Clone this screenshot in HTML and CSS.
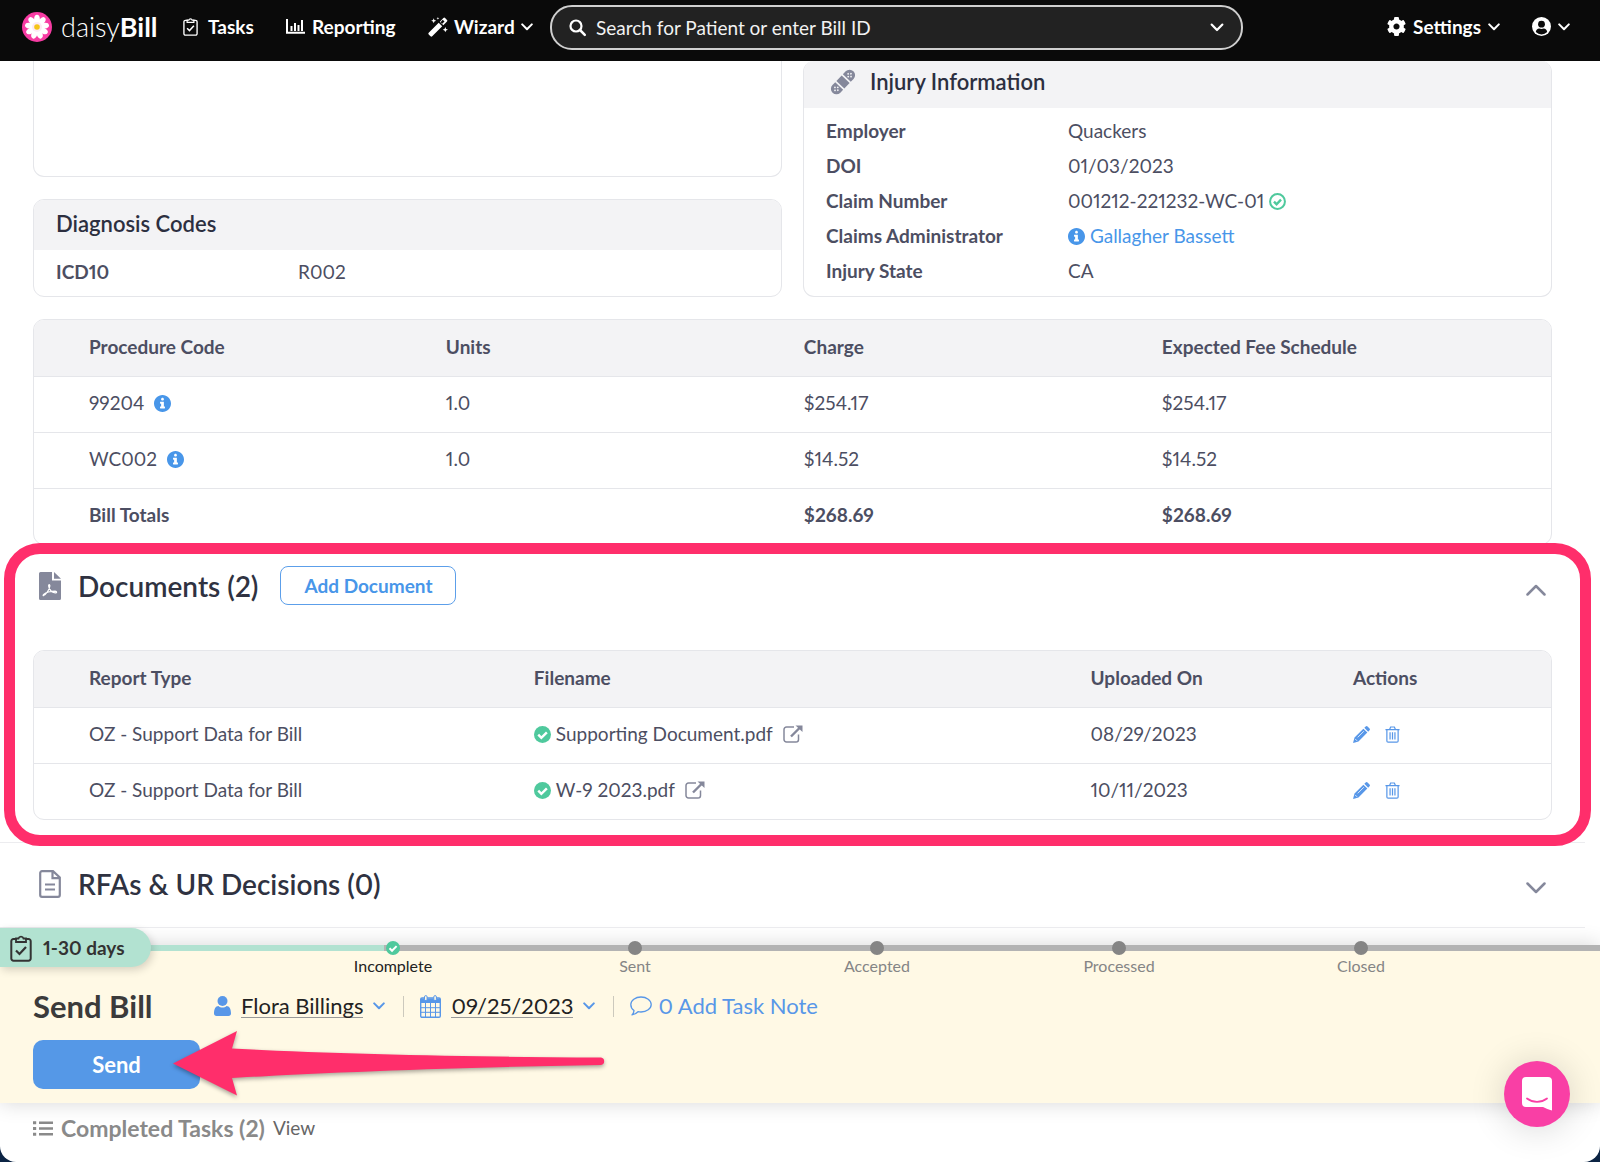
FILE: index.html
```html
<!DOCTYPE html>
<html lang="en">
<head>
<meta charset="utf-8">
<meta name="viewport" content="width=device-width, initial-scale=1">
<title>daisyBill</title>
<link rel="stylesheet" href="styles.css">
</head>
<body>
<svg class="sprite" aria-hidden="true">
  <symbol id="chevron" viewBox="0 0 12 8"><path d="M1.2 1.4 6 6.2l4.800-4.800" fill="none" stroke="currentColor" stroke-width="2" stroke-linecap="round" stroke-linejoin="round"/></symbol>
  <symbol id="chevron-thin" viewBox="0 0 20 12"><path d="M1.500 1.500 10 10l8.500-8.500" fill="none" stroke="currentColor" stroke-width="2.500" stroke-linecap="round" stroke-linejoin="round"/></symbol>
  <symbol id="clipboard" viewBox="0 0 22 28"><path d="M7 5H3.500A2.200 2.200 0 0 0 1.300 7.200v17.300a2.200 2.200 0 0 0 2.200 2.200h15a2.200 2.200 0 0 0 2.200-2.200V7.200A2.200 2.200 0 0 0 18.500 5H15" fill="none" stroke="currentColor" stroke-width="2"/><path d="M6 8V4.500h2.500a2.600 2.600 0 0 1 5 0H16V8z" fill="none" stroke="currentColor" stroke-width="1.800"/><path d="m6 16.500 3.500 3.500 6.500-7" fill="none" stroke="currentColor" stroke-width="2.200"/></symbol>
  <symbol id="info" viewBox="8 8 496 496"><path fill="currentColor" d="M256 8C119.043 8 8 119.083 8 256c0 136.997 111.043 248 248 248s248-111.003 248-248C504 119.083 392.957 8 256 8zm0 80c23.196 0 42 18.804 42 42s-18.804 42-42 42-42-18.804-42-42 18.804-42 42-42zm72 300c0 6.627-5.373 12-12 12h-120c-6.627 0-12-5.373-12-12v-32c0-6.627 5.373-12 12-12h20v-84h-20c-6.627 0-12-5.373-12-12v-32c0-6.627 5.373-12 12-12h88c6.627 0 12 5.373 12 12v128h20c6.627 0 12 5.373 12 12v32z"/></symbol>
  <symbol id="check" viewBox="0 0 16 16"><circle cx="8" cy="8" r="8" fill="#4fc99d"/><path d="m4 8.200 2.900 2.900 5.200-5.200" fill="none" stroke="#fff" stroke-width="2.300"/></symbol>
  <symbol id="check-ring" viewBox="0 0 16 16"><circle cx="8" cy="8" r="7" fill="none" stroke="#4fc99d" stroke-width="1.900"/><path d="m4.700 8.200 2.400 2.400 4.200-4.300" fill="none" stroke="#4fc99d" stroke-width="2.300"/></symbol>
  <symbol id="external" viewBox="0 0 20 18"><path d="M11 2H3.500A2.500 2.500 0 0 0 1 4.500v10A2.500 2.500 0 0 0 3.500 17h9.500a2.500 2.500 0 0 0 2.500-2.500V9.500" fill="none" stroke="currentColor" stroke-width="1.500"/><path d="m8 11.500 8.500-8.500" stroke="currentColor" stroke-width="2.400"/><path d="M12.500.5H19.500V7z" fill="currentColor"/></symbol>
  <symbol id="pencil" viewBox="0 0 18 18"><path fill="currentColor" d="m11 2.800 4.200 4.200-9.400 9.400L0 18l1.600-5.800zM12 1.900 13.400.5a1.500 1.500 0 0 1 2 0l2.100 2.100a1.500 1.500 0 0 1 0 2L16.100 6z"/><path d="m2.300 13.700 2 2M5 12l6.500-6.500" stroke="#fff" stroke-width=".8"/></symbol>
  <symbol id="trash" viewBox="0 0 16 18"><path d="M.5 3.700h15M5 3.400 6 1h4l1 2.400M2 4v11.800c0 .8.500 1.300 1.300 1.300h9.400c.8 0 1.300-.5 1.300-1.300V4M5.400 6.700v7.500M8 6.700v7.500M10.600 6.700v7.500" fill="none" stroke="currentColor" stroke-width="1.300"/></symbol>
</svg>

<header class="topbar">
  <a class="brand" href="#">
    <svg class="brand-mark" viewBox="0 0 30 30" aria-hidden="true">
      <circle cx="15" cy="15" r="15" fill="#f73ca3"/>
      <g fill="#fff">
        <ellipse cx="15" cy="7.700" rx="2.900" ry="4.900"/>
        <ellipse cx="15" cy="7.700" rx="2.900" ry="4.900" transform="rotate(40 15 15)"/>
        <ellipse cx="15" cy="7.700" rx="2.900" ry="4.900" transform="rotate(80 15 15)"/>
        <ellipse cx="15" cy="7.700" rx="2.900" ry="4.900" transform="rotate(120 15 15)"/>
        <ellipse cx="15" cy="7.700" rx="2.900" ry="4.900" transform="rotate(160 15 15)"/>
        <ellipse cx="15" cy="7.700" rx="2.900" ry="4.900" transform="rotate(200 15 15)"/>
        <ellipse cx="15" cy="7.700" rx="2.900" ry="4.900" transform="rotate(240 15 15)"/>
        <ellipse cx="15" cy="7.700" rx="2.900" ry="4.900" transform="rotate(280 15 15)"/>
        <ellipse cx="15" cy="7.700" rx="2.900" ry="4.900" transform="rotate(320 15 15)"/>
      </g>
      <circle cx="15" cy="15" r="5" fill="#fdeaf5"/>
      <circle cx="15" cy="15" r="2.800" fill="#f5c518"/>
    </svg>
    <span class="brand-name">daisy<b>Bill</b></span>
  </a>
  <nav class="nav">
    <a class="nav-link nav-tasks" href="#"><svg width="15" height="19" aria-hidden="true"><use href="#clipboard"/></svg>Tasks</a>
    <a class="nav-link nav-reporting" href="#"><svg width="19" height="15" viewBox="0 0 19 15" aria-hidden="true"><path d="M1 0v13.800h18" fill="none" stroke="currentColor" stroke-width="2"/><path d="M5.500 7v5M9 4v8M12.500 6v6M16 1v11" stroke="currentColor" stroke-width="2"/></svg>Reporting</a>
    <a class="nav-link nav-wizard" href="#"><svg width="20" height="20" viewBox="0 0 20 20" aria-hidden="true"><path fill="currentColor" d="m.7 15.800 10-10 3.500 3.500-10 10a1.200 1.200 0 0 1-1.700 0L.7 17.500a1.200 1.200 0 0 1 0-1.700zM11.800 4.700 15.400 1a1.200 1.200 0 0 1 1.700 0L19 2.900a1.200 1.200 0 0 1 0 1.700l-3.700 3.700zM5 3l.7-1.800L6.400 3l1.800.7-1.800.7L5.700 6.200 5 4.400l-1.800-.7zM16.500 12l.8-2 .8 2 1.900.7-1.900.7-.8 1.900-.8-1.900-1.800-.7zM9.500 1l.4-1 .4 1 1 .4-1 .4-.4 1-.4-1-1-.4z"/><path d="m12.500 5.200 2.200-2.400 1.800 1.700-2.200 2.300z" fill="#0a0a0a"/></svg>Wizard<svg class="caret" width="12" height="8" aria-hidden="true"><use href="#chevron"/></svg></a>
  </nav>
  <form class="search" role="search">
    <svg width="17" height="17" viewBox="0 0 17 17" aria-hidden="true"><circle cx="7" cy="7" r="5.500" fill="none" stroke="#fff" stroke-width="2.200"/><path d="m11 11 4.800 4.800" stroke="#fff" stroke-width="2.500" stroke-linecap="round"/></svg>
    <input class="search-input" type="text" aria-label="Search" placeholder="Search for Patient or enter Bill ID">
    <svg class="search-caret" width="14" height="9" viewBox="0 0 12 8" aria-hidden="true"><use href="#chevron"/></svg>
  </form>
  <div class="account">
    <a class="nav-link nav-settings" href="#"><svg width="19" height="19" viewBox="8 8 496 496" aria-hidden="true"><path fill="currentColor" d="M487.400 315.700l-42.600-24.600c4.300-23.200 4.300-47 0-70.200l42.600-24.600c4.900-2.800 7.100-8.600 5.500-14-11.100-35.600-30-67.800-54.700-94.600-3.800-4.100-10-5.100-14.800-2.300L380.800 110c-17.900-15.400-38.500-27.300-60.800-35.100V25.800c0-5.600-3.900-10.500-9.400-11.700-36.700-8.200-74.300-7.800-109.200 0-5.500 1.200-9.400 6.100-9.400 11.700V75c-22.200 7.900-42.800 19.800-60.800 35.100L88.700 85.500c-4.900-2.800-11-1.900-14.800 2.300-24.700 26.700-43.600 58.900-54.700 94.600-1.700 5.400.6 11.200 5.500 14L67.300 221c-4.300 23.200-4.300 47 0 70.200l-42.600 24.600c-4.900 2.800-7.100 8.600-5.500 14 11.100 35.600 30 67.800 54.700 94.600 3.800 4.100 10 5.100 14.800 2.300l42.600-24.600c17.900 15.400 38.500 27.300 60.800 35.100v49.200c0 5.600 3.900 10.500 9.400 11.700 36.700 8.200 74.300 7.800 109.200 0 5.500-1.200 9.400-6.100 9.400-11.700v-49.200c22.200-7.900 42.800-19.800 60.800-35.100l42.600 24.600c4.900 2.800 11 1.900 14.800-2.300 24.700-26.700 43.600-58.900 54.700-94.600 1.500-5.500-.7-11.300-5.600-14.100zM256 336c-44.100 0-80-35.900-80-80s35.900-80 80-80 80 35.900 80 80-35.900 80-80 80z"/></svg>Settings<svg class="caret" width="12" height="8" aria-hidden="true"><use href="#chevron"/></svg></a>
    <a class="nav-link" href="#" aria-label="Account"><svg width="19" height="19" viewBox="0 0 19 19" aria-hidden="true"><circle cx="9.500" cy="9.500" r="9.500" fill="#fff"/><circle cx="9.500" cy="7.200" r="3.400" fill="#0a0a0a"/><path d="M3.800 15c.3-2.200 1.700-3.400 3.400-3.400.7.300 1.500.5 2.300.5s1.600-.2 2.300-.5c1.700 0 3.100 1.200 3.400 3.400a8 8 0 0 1-11.400 0z" fill="#0a0a0a"/></svg><svg class="caret" width="12" height="8" aria-hidden="true"><use href="#chevron"/></svg></a>
  </div>
</header>

<main class="content">
  <div class="overview">
    <div class="cards">
      <div class="cards-col">
        <section class="card card-blank"></section>
        <section class="card">
          <h3 class="card-title">Diagnosis Codes</h3>
          <dl class="facts">
            <dt>ICD10</dt><dd>R002</dd>
          </dl>
        </section>
      </div>
      <section class="card card-injury">
        <h3 class="card-title"><svg width="28" height="28" viewBox="0 0 28 28" aria-hidden="true"><g transform="rotate(-46 14 14)"><path fill="#85889b" d="M6 8.500h2.500v11H4.500A5.500 5.500 0 0 1-1 14a5.500 5.500 0 0 1 5.500-5.500zM10.200 8.500h7.600v11h-7.600zM19.500 8.500h4A5.500 5.500 0 0 1 29 14a5.500 5.500 0 0 1-5.500 5.500h-4z"/><g fill="#f3f3f5"><circle cx="2.500" cy="14" r=".9"/><circle cx="6.500" cy="14" r=".9"/><circle cx="4.500" cy="12" r=".9"/><circle cx="4.500" cy="16" r=".9"/><circle cx="21.500" cy="14" r=".9"/><circle cx="25.500" cy="14" r=".9"/><circle cx="23.500" cy="12" r=".9"/><circle cx="23.500" cy="16" r=".9"/></g></g></svg>Injury Information</h3>
        <dl class="facts">
          <dt>Employer</dt><dd>Quackers</dd>
          <dt>DOI</dt><dd>01/03/2023</dd>
          <dt>Claim Number</dt><dd>001212-221232-WC-01 <svg width="17" height="17" aria-hidden="true"><use href="#check-ring"/></svg></dd>
          <dt>Claims Administrator</dt><dd class="admin"><svg width="17" height="17" aria-hidden="true"><use href="#info"/></svg> <a href="#">Gallagher Bassett</a></dd>
          <dt>Injury State</dt><dd>CA</dd>
        </dl>
      </section>
    </div>

    <div class="card">
      <table class="grid-table codes">
        <thead><tr><th>Procedure Code</th><th>Units</th><th>Charge</th><th>Expected Fee Schedule</th></tr></thead>
        <tbody>
          <tr><td>99204<svg class="info" width="17" height="17" aria-hidden="true"><use href="#info"/></svg></td><td>1.0</td><td>$254.17</td><td>$254.17</td></tr>
          <tr><td>WC002<svg class="info" width="17" height="17" aria-hidden="true"><use href="#info"/></svg></td><td>1.0</td><td>$14.52</td><td>$14.52</td></tr>
          <tr class="totals"><td>Bill Totals</td><td></td><td>$268.69</td><td>$268.69</td></tr>
        </tbody>
      </table>
    </div>
  </div>

  <section class="panel documents">
    <div class="panel-head">
      <svg width="22" height="28" viewBox="0 0 22 28" aria-hidden="true"><path fill="#85889b" d="M1.500 0H13v8.500h9V26.500a1.500 1.500 0 0 1-1.500 1.500h-19A1.500 1.500 0 0 1 0 26.500v-25A1.500 1.500 0 0 1 1.500 0zM15 0l7 6.700h-7z"/><path d="M4.500 23.500c2.500-.8 6-6 6.300-9.500 0-1.800-1.200-1.700-1.100 0 .3 3.400 3 6.500 6.500 6.900 1.900.1 1.700-1.600 0-1.700-4 .1-9.500 1.500-11.500 3.200-.8.800-.5 1.400-.2 1.100z" fill="none" stroke="#fff" stroke-width="1.300"/></svg>
      <h2>Documents (2)</h2>
      <button class="btn-outline" type="button">Add Document</button>
      <button class="toggle" type="button" aria-label="Collapse documents"><svg class="flip" width="20" height="12" aria-hidden="true"><use href="#chevron-thin"/></svg></button>
    </div>
    <div class="card">
      <table class="grid-table files">
        <thead><tr><th>Report Type</th><th>Filename</th><th>Uploaded On</th><th>Actions</th></tr></thead>
        <tbody>
          <tr>
            <td>OZ - Support Data for Bill</td>
            <td><span class="file"><svg width="17" height="17" aria-hidden="true"><use href="#check"/></svg>Supporting Document.pdf<a href="#" aria-label="Open"><svg width="20" height="18" aria-hidden="true"><use href="#external"/></svg></a></span></td>
            <td>08/29/2023</td>
            <td><span class="actions"><button type="button" aria-label="Edit"><svg width="17" height="17" aria-hidden="true"><use href="#pencil"/></svg></button><button type="button" aria-label="Delete"><svg width="15" height="17" aria-hidden="true"><use href="#trash"/></svg></button></span></td>
          </tr>
          <tr>
            <td>OZ - Support Data for Bill</td>
            <td><span class="file"><svg width="17" height="17" aria-hidden="true"><use href="#check"/></svg>W-9 2023.pdf<a href="#" aria-label="Open"><svg width="20" height="18" aria-hidden="true"><use href="#external"/></svg></a></span></td>
            <td>10/11/2023</td>
            <td><span class="actions"><button type="button" aria-label="Edit"><svg width="17" height="17" aria-hidden="true"><use href="#pencil"/></svg></button><button type="button" aria-label="Delete"><svg width="15" height="17" aria-hidden="true"><use href="#trash"/></svg></button></span></td>
          </tr>
        </tbody>
      </table>
    </div>
    <div class="highlight"></div>
  </section>

  <section class="panel">
    <div class="panel-head">
      <svg width="22" height="28" viewBox="0 0 22 28" aria-hidden="true"><path d="M3 1.200h11l6.800 6.300V25a1.800 1.800 0 0 1-1.800 1.800H3A1.800 1.800 0 0 1 1.200 25V3A1.800 1.800 0 0 1 3 1.200zM13.500 1.500v6.700h7" fill="none" stroke="#85889b" stroke-width="2.200"/><path d="M6 14.500h10M6 19.500h10" stroke="#85889b" stroke-width="2"/></svg>
      <h2>RFAs &amp; UR Decisions (0)</h2>
      <button class="toggle" type="button" aria-label="Expand RFAs and UR decisions"><svg width="20" height="12" aria-hidden="true"><use href="#chevron-thin"/></svg></button>
    </div>
  </section>
</main>

<section class="task">
  <div class="track"><div class="track-done"></div></div>
  <div class="due"><svg width="22" height="28" aria-hidden="true"><use href="#clipboard"/></svg>1-30 days</div>
  <ol class="steps">
    <li class="current"><svg width="14" height="14" aria-hidden="true"><use href="#check"/></svg>Incomplete</li>
    <li><i class="dot"></i>Sent</li>
    <li><i class="dot"></i>Accepted</li>
    <li><i class="dot"></i>Processed</li>
    <li><i class="dot"></i>Closed</li>
  </ol>
  <div class="task-row">
    <h2 class="task-title">Send Bill</h2>
    <button class="meta" type="button"><svg width="17" height="20" viewBox="0 0 17 20" aria-hidden="true"><circle cx="8.500" cy="5" r="5" fill="#5897e8"/><path d="M0 17.500c0-4.500 1.500-7.500 4.500-7.500 1 1 2.500 1.500 4 1.500s3-.5 4-1.500c3 0 4.500 3 4.500 7.500 0 1.500-1 2.500-2.500 2.500h-12C1 20 0 19 0 17.500z" fill="#5897e8"/></svg><span class="meta-text">Flora Billings</span><svg width="12" height="8" aria-hidden="true"><use href="#chevron"/></svg></button>
    <button class="meta" type="button"><svg width="21" height="23" viewBox="0 0 21 23" aria-hidden="true"><path d="M2 3h17a1.300 1.300 0 0 1 1.300 1.300V21A1.300 1.300 0 0 1 19 22.300H2A1.300 1.300 0 0 1 .7 21V4.300A1.300 1.300 0 0 1 2 3z" fill="none" stroke="#5897e8" stroke-width="1.400"/><path d="M1 3.500h19V8H1z" fill="#5897e8"/><path d="M5.500 8v14M10.500 8v14M15.500 8v14M1 12.700h19M1 17.300h19" stroke="#5897e8"/><rect x="4.500" y=".6" width="2.600" height="5" rx="1.300" fill="#fff9e5" stroke="#5897e8"/><rect x="13.800" y=".6" width="2.600" height="5" rx="1.300" fill="#fff9e5" stroke="#5897e8"/></svg><span class="meta-text">09/25/2023</span><svg width="12" height="8" aria-hidden="true"><use href="#chevron"/></svg></button>
    <a class="meta meta-note" href="#"><svg width="22" height="20" viewBox="0 0 22 20" aria-hidden="true"><path d="M11 1c5.600 0 10.200 3.300 10.200 7.500S16.600 16 11 16c-1 0-2-.1-3-.3-1.500 1.600-3.500 2.800-6 3.200 1.300-1.400 1.900-2.700 2-4.300C2 13.100.8 10.900.8 8.500.8 4.300 5.400 1 11 1z" fill="none" stroke="#5897e8" stroke-width="1.300" stroke-linejoin="round"/></svg>0 Add Task Note</a>
  </div>
  <div class="task-actions">
    <button class="btn-send" type="button">Send</button>
    <svg class="arrow" width="434" height="68" viewBox="0 0 434 68" aria-hidden="true"><path fill="#ff2e6b" d="M1 33.500 65 1l-5 17.500C160 24 300 27 429 27.500a3.800 3.800 0 0 1 0 7.500C300 37 160 42 60 48l5 17.500z"/></svg>
  </div>
</section>

<footer class="completed">
  <svg width="20" height="15" viewBox="0 0 20 15" aria-hidden="true"><path d="M6 1.800h14M6 7.500h14M6 13.200h14" stroke="#8a8a8a" stroke-width="2.500"/><path d="M0 1.800h3.200M0 7.500h3.200M0 13.200h3.200" stroke="#8a8a8a" stroke-width="3"/></svg>
  <h3>Completed Tasks (2)</h3>
  <a href="#">View</a>
</footer>

<button class="chat" type="button" aria-label="Open chat"><svg width="30" height="34" viewBox="0 0 30 34" aria-hidden="true"><path fill="#fff" d="M4 0h22a4 4 0 0 1 4 4v29.500c-3.500-.8-6-2-9-3.500H4a4 4 0 0 1-4-4V4a4 4 0 0 1 4-4z"/><path d="M5 21.500c6 4.500 14 4.500 20 0" fill="none" stroke="#f93fa5" stroke-width="1.800" stroke-linecap="round"/></svg></button>
</body>
</html>
```
FILE: styles.css
```css
* { box-sizing: border-box; }

html { background: #0c2444; }

body {
  margin: 0;
  min-height: 100vh;
  display: flex;
  flex-direction: column;
  background: #fff;
  border-radius: 0 0 16px 16px;
  font-family: Lato, "Open Sans", sans-serif;
  font-size: 19px;
  line-height: 24px;
  font-variant-numeric: proportional-nums;
  color: #4c4e62;
}

h2, h3, dl, dd, ol { margin: 0; padding: 0; }
a { color: inherit; text-decoration: none; }
button { font: inherit; cursor: pointer; }
svg { flex: none; overflow: visible; }
.sprite { position: absolute; width: 0; height: 0; }

/* Top bar */
.topbar {
  position: sticky;
  top: 0;
  z-index: 5;
  display: flex;
  align-items: center;
  height: 61px;
  padding: 0 30px 6px 22px;
  background: #0a0a0a;
  color: #fff;
}
.brand { display: flex; align-items: center; gap: 9px; width: 161px; padding-bottom: 2px; }
.brand-mark { width: 30px; height: 30px; }
.brand-name { font-size: 27px; line-height: 32px; font-weight: 300; }
.brand-name b { font-weight: 700; }
.nav { display: flex; }
.nav-link { display: flex; align-items: center; gap: 7px; padding-bottom: 2px; font-weight: 700; }
.nav-tasks { width: 103px; gap: 10px; }
.nav-reporting { width: 142px; }
.nav-wizard { width: 122px; gap: 6px; }
.search {
  display: flex;
  align-items: center;
  gap: 10px;
  flex: 0 1 693px;
  min-width: 0;
  height: 45px;
  padding: 0 17px;
  border: 2px solid #cfcfcf;
  border-radius: 22px;
  background: #222;
}
.search-input {
  flex: 1;
  min-width: 0;
  padding: 0;
  border: 0;
  outline: 0;
  background: transparent;
  font: inherit;
  color: #fff;
}
.search-input::placeholder { color: #f2f2f2; opacity: 1; }
.account { display: flex; gap: 32px; margin-left: auto; }

/* Cards */
.content { margin-right: 15px; }
.overview { padding: 0 33px; }
.cards { display: grid; grid-template-columns: 1fr 1fr; gap: 21px; margin-bottom: 22px; }
.cards-col { display: flex; flex-direction: column; gap: 22px; }
.card {
  border: 1px solid #e5e6ea;
  border-radius: 11px;
  overflow: hidden;
  background: #fff;
}
.card-blank { flex: 1; border-top: 0; border-radius: 0 0 11px 11px; }
.card-title {
  display: flex;
  align-items: center;
  gap: 13px;
  height: 50px;
  padding: 0 22px 2px;
  background: #f3f3f5;
  font-size: 22px;
  font-weight: 600;
  color: #2c2f40;
}
.card-injury { border-top: 0; }
.card-injury .card-title { height: 47px; padding: 0 25px 6px; }
.facts {
  display: grid;
  grid-template-columns: 242px 1fr;
  row-gap: 11px;
  padding: 10px 22px 12px;
}
.facts dt { font-weight: 700; }
.facts svg { vertical-align: -2px; }
.card-injury .facts { padding: 11px 22px 13px; }
.admin { color: #4896e9; }

/* Tables */
.grid-table { width: 100%; border-collapse: collapse; table-layout: fixed; }
.grid-table th,
.grid-table td { height: 56px; padding: 0 0 2px 22px; text-align: left; }
.grid-table th { background: #f3f3f5; font-weight: 700; }
.grid-table tbody tr { border-top: 1px solid #e5e6ea; }
.grid-table th:first-child,
.grid-table td:first-child { padding-left: 55px; }
.codes th:nth-child(1) { width: 25.7%; }
.codes th:nth-child(2),
.codes th:nth-child(3) { width: 23.6%; }
.files th:nth-child(1) { width: 31.5%; }
.files th:nth-child(2) { width: 36.7%; }
.files th:nth-child(3) { width: 17.3%; }
.codes .info { margin-left: 10px; vertical-align: -2px; color: #4896e9; }
.totals { font-weight: 700; }
.file { display: flex; align-items: center; gap: 5px; }
.file a { display: flex; margin-left: 5px; color: #85889b; }
.actions { display: flex; gap: 15px; }
.actions button { display: flex; padding: 0; border: 0; background: none; color: #5897e8; }

/* Collapsible panels */
.panel { position: relative; padding: 0 33px; border-bottom: 1px solid #ececef; }
.panel-head { display: flex; align-items: center; height: 84px; padding: 0 6px 3px; }
.panel-head h2 { margin: 0 22px 0 17px; font-size: 28px; line-height: 32px; font-weight: 600; color: #2f3241; }
.documents { padding-bottom: 22px; }
.documents .panel-head { height: 105px; padding-bottom: 24px; }
.btn-outline {
  height: 39px;
  padding: 0 23px;
  border: 1px solid #5c9fea;
  border-radius: 8px;
  background: #fff;
  font-weight: 700;
  color: #4896e9;
}
.toggle { display: flex; margin-left: auto; padding: 8px 0 0; border: 0; background: none; color: #85889b; }
.flip { transform: rotate(180deg); }
.highlight {
  position: absolute;
  inset: -2px -6px -4px 4px;
  z-index: 2;
  border: 11px solid #ff2e6b;
  border-radius: 36px;
  pointer-events: none;
}

/* Current task */
.task {
  position: relative;
  margin-top: 17px;
  padding-bottom: 14px;
  background: #fff9e5;
  box-shadow: 0 0 20px rgba(0, 0, 0, .16);
  color: #222;
}
.track { height: 6px; background: #b3b3b3; }
.track-done { width: 24%; height: 6px; background: #b2e2d1; }
.due {
  position: absolute;
  left: 0;
  top: -17px;
  display: flex;
  align-items: center;
  gap: 11px;
  height: 39px;
  padding: 0 26px 0 10px;
  border-radius: 0 20px 20px 0;
  background: #b2e2d1;
  box-shadow: 2px 3px 8px rgba(0, 0, 0, .16);
  font-weight: 700;
  color: #333;
}
.steps {
  position: relative;
  display: flex;
  margin: -10px 118px 0 272px;
  list-style: none;
  font-size: 16px;
  line-height: 20px;
  color: #858585;
}
.steps li { flex: 1; display: flex; flex-direction: column; align-items: center; }
.steps .current { color: #222; }
.steps svg, .dot { margin-bottom: 1px; }
.dot { width: 14px; height: 14px; border-radius: 50%; background: #858585; }
.task-row { display: flex; align-items: center; height: 32px; margin: 14px 33px 18px; }
.task-title { width: 181px; font-size: 31px; line-height: 32px; font-weight: 700; color: #3b3b3b; }
.meta {
  display: flex;
  align-items: center;
  gap: 10px;
  height: 21px;
  padding: 0 18px 0 0;
  border: 0;
  background: none;
  font-size: 22px;
  color: #5897e8;
}
.meta + .meta { padding-left: 16px; border-left: 1px solid #ccc9bd; }
.meta-text { border-bottom: 1px solid #999; line-height: 22px; color: #222; }
.meta-note { gap: 6px; }
.task-actions { display: flex; position: relative; padding-left: 33px; }
.btn-send {
  width: 167px;
  height: 49px;
  border: 0;
  border-radius: 10px;
  background: #5598e7;
  font-size: 22px;
  font-weight: 700;
  color: #fff;
}
.arrow { position: absolute; left: 172px; top: -10px; filter: drop-shadow(0 2px 2px rgba(0, 0, 0, .35)); }

/* Completed tasks */
.completed { display: flex; align-items: center; height: 50px; padding-left: 33px; color: #666; }
.completed h3 { margin: 0 8px; font-size: 23px; font-weight: 700; color: #8a8a8a; }

.chat {
  position: fixed;
  right: 30px;
  bottom: 35px;
  display: flex;
  align-items: center;
  justify-content: center;
  width: 66px;
  height: 66px;
  padding: 0;
  border: 0;
  border-radius: 50%;
  background: #f93fa5;
  box-shadow: 0 2px 36px rgba(0, 0, 0, .16);
}
```
